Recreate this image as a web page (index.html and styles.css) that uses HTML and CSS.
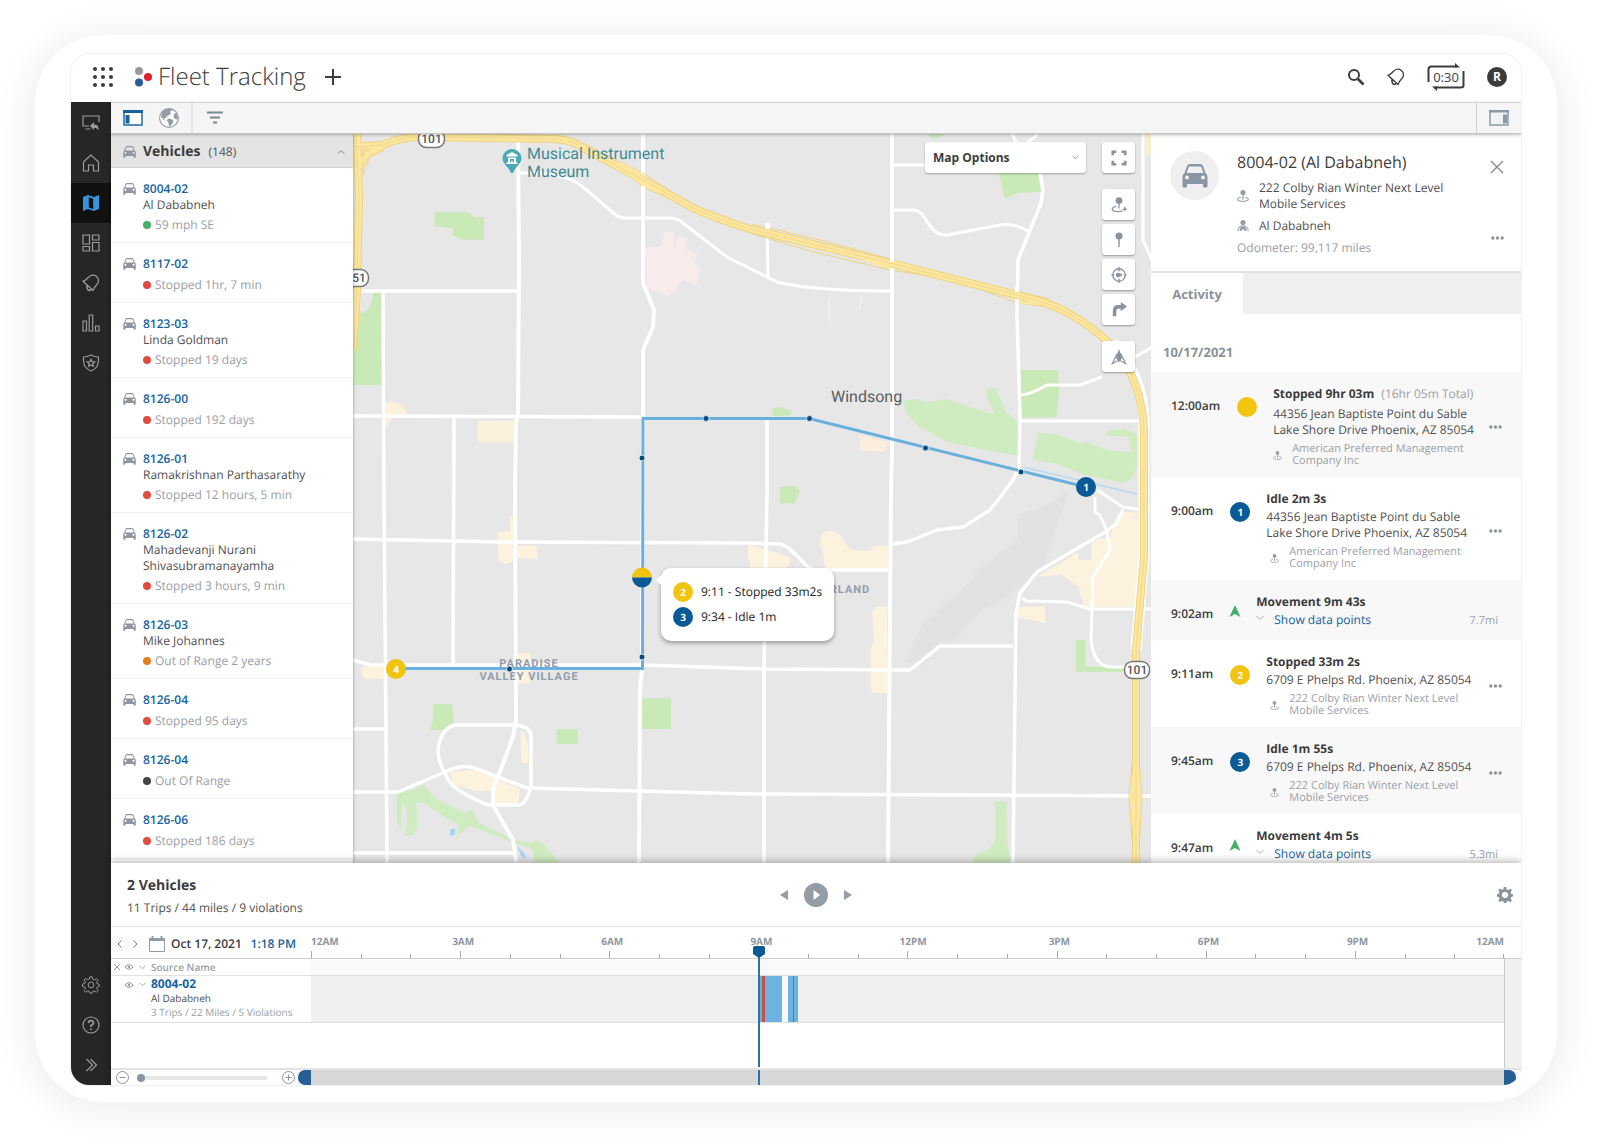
FILE: index.html
```html
<!DOCTYPE html>
<html lang="en">
<head>
<meta charset="utf-8">
<title>Fleet Tracking</title>
<link rel="stylesheet" href="styles.css">
</head>
<body>
<svg class="sprite" aria-hidden="true">
  <symbol id="car" viewBox="0 0 26 24"><path fill-rule="evenodd" d="M5 2 Q6 0 8 0 H18 Q20 0 21 2 L23.500 9 Q25.500 10.500 25.500 13 V22 Q25.500 23.500 24 23.500 H22.500 Q21 23.500 21 22 V20 H5 V22 Q5 23.500 3.500 23.500 H2 Q.5 23.500 .5 22 V13 Q.5 10.500 2.500 9 Z M7 2.500 L4.500 9 H21.500 L19 2.500 Z M5 11.500 a2 2 0 1 0 .01 0 Z M21 11.500 a2 2 0 1 0 .01 0 Z"/></symbol>
  <symbol id="pin" viewBox="0 0 14 14"><circle cx="7" cy="3" r="3"/><path d="M6.300 5h1.400v6H6.300z"/><path d="M4.500 8.500C2 9 .8 9.800 .8 10.700c0 1.500 3 2.500 6.200 2.500s6.200-1 6.200-2.500c0-.9-1.200-1.700-3.700-2.200" fill="none" stroke="currentColor" stroke-width="1.200"/></symbol>
  <symbol id="bell" viewBox="0 0 18 18"><path d="M1 7.200 C5 6.500 6 2.500 9 1.500 C13 .3 16.500 3 16.500 7 C16.500 11 13 10.500 11 16.500 Z M4.500 11.500 L5.500 15.500 Q7.500 17.500 9 15.500" fill="none" stroke="currentColor" stroke-width="1.300" stroke-linejoin="round"/></symbol>
  <symbol id="dots" viewBox="0 0 14 4"><circle cx="2" cy="2" r="1.800"/><circle cx="7" cy="2" r="1.800"/><circle cx="12" cy="2" r="1.800"/></symbol>
  <symbol id="down" viewBox="0 0 8 6"><path d="M.5 1 L4 4.500 L7.500 1" fill="none" stroke="currentColor"/></symbol>
  <symbol id="eye" viewBox="0 0 12 8"><path d="M1 4 Q6 -1.500 11 4 Q6 9.500 1 4Z" fill="none" stroke="currentColor" stroke-width="1.200"/><circle cx="6" cy="4" r="1.400"/></symbol>
  <symbol id="arrow" viewBox="0 0 12 12"><path d="M6 0 L11.500 12 L6 9 L.5 12Z"/></symbol>
  <symbol id="gear" viewBox="-10 -10 20 20"><path fill-rule="evenodd" d="M-1.500-10h3l.6 3 2 .9 2.600-1.800 2 2-1.700 2.600.8 2 2.200.3v3l-2.200.4-.9 2 1.800 2.500-2 2-2.600-1.700-2 .8-.6 2h-3l-.5-2-2-.8-2.500 1.700-2-2 1.700-2.500-.9-2-2.800-.6v-3l2.800-.5.9-2-1.700-2.500 2-2 2.500 1.700 2-.8z M0-4a4 4 0 1 0 .01 0Z"/></symbol>
</svg>

<div class="frame">
<div class="app">
  <header class="topbar">
    <button class="icon-btn apps" aria-label="Apps"><svg width="20" height="20" viewBox="0 0 20 20"><g fill="#3c3c3c"><circle cx="2" cy="2" r="2"/><circle cx="10" cy="2" r="2"/><circle cx="18" cy="2" r="2"/><circle cx="2" cy="10" r="2"/><circle cx="10" cy="10" r="2"/><circle cx="18" cy="10" r="2"/><circle cx="2" cy="18" r="2"/><circle cx="10" cy="18" r="2"/><circle cx="18" cy="18" r="2"/></g></svg></button>
    <svg class="logo" width="17" height="20" viewBox="0 0 17 20"><circle cx="4" cy="4" r="4" fill="#999"/><circle cx="13" cy="10" r="4" fill="#e0202e"/><circle cx="4" cy="15.500" r="4" fill="#2b5b9b"/></svg>
    <h1>Fleet Tracking</h1>
    <button class="icon-btn" aria-label="Add"><svg width="16" height="16" viewBox="0 0 16 16"><path d="M8 0v16M0 8h16" stroke="#3c3c3c" stroke-width="2"/></svg></button>
    <span class="spacer"></span>
    <div class="top-actions">
      <button class="icon-btn" aria-label="Search"><svg width="18" height="18" viewBox="0 0 18 18" fill="none" stroke="#3c3c3c"><circle cx="7" cy="7" r="5" stroke-width="2"/><path d="M11 11l5.500 5.500" stroke-width="2.600"/></svg></button>
      <button class="icon-btn dark" aria-label="Alerts"><svg width="18" height="18"><use href="#bell"/></svg></button>
      <button class="timer"><svg width="38" height="28" viewBox="0 0 38 28"><path d="M1.500 19V6.500q0-3 3-3H30M36.500 8v14.500q0 2-3 2H8" fill="none" stroke="#3c3c3c" stroke-width="2"/><path d="M28 0l5 4.500h-5zM10 28l-5-4.500h5z" fill="#3c3c3c"/></svg><span>0:30</span></button>
      <button class="user">R</button>
    </div>
  </header>

  <div class="body">
    <nav class="rail">
      <a href="#" aria-label="Share"><svg viewBox="0 0 18 18"><path d="M7 12H1V2h16v6M3.500 15h5"/><path class="solid" d="M8 12l4-4v2.500c4 0 5 3 4.500 6-1-2-2-2.500-4.500-2.500V16z"/></svg></a>
      <a href="#" aria-label="Home"><svg viewBox="0 0 18 18"><path d="M1.500 8L9 1l7.500 7v9H11.500v-6h-5v6h-5z"/></svg></a>
      <a href="#" class="on" aria-label="Map"><svg viewBox="0 0 18 18"><path class="fill" fill-rule="evenodd" d="M1 3l5-2 6 2 5-2v14l-5 2-6-2-5 2zM6.800 3.200v10.300l4.400 1.500V4.700z"/></svg></a>
      <a href="#" aria-label="Dashboard"><svg viewBox="0 0 18 18"><path d="M1 1h6.500v9H1zM10.500 1H17v5h-6.500zM1 12.500h6.500V17H1zM10.500 8.500H17V17h-6.500z"/></svg></a>
      <a href="#" aria-label="Alerts"><svg><use href="#bell"/></svg></a>
      <a href="#" aria-label="Reports"><svg viewBox="0 0 18 18"><path d="M1 7h3.500v10H1zM7.200 1h3.500v16H7.200zM13.500 12H17v5h-3.500z"/></svg></a>
      <a href="#" aria-label="Safety"><svg viewBox="0 0 18 18"><path d="M9 1c3 1.500 5 2 7.500 2 0 6 0 11-7.500 14C1.500 14 1.500 9 1.500 3 4 3 6 2.500 9 1z"/><path d="M9 5.200l1.100 2.500 2.600.2-2 1.800.7 2.600L9 10.900l-2.400 1.400.7-2.600-2-1.800 2.600-.2z"/></svg></a>
      <span class="spacer"></span>
      <a href="#" aria-label="Settings"><svg viewBox="-11 -11 22 22"><path d="M-1.500-10h3l.6 3 2 .9 2.600-1.800 2 2-1.700 2.600.8 2 2.200.3v3l-2.200.4-.9 2 1.800 2.500-2 2-2.600-1.700-2 .8-.6 2h-3l-.5-2-2-.8-2.500 1.700-2-2 1.700-2.500-.9-2-2.800-.6v-3l2.800-.5.9-2-1.700-2.500 2-2 2.500 1.700 2-.8z"/><circle r="3.500"/></svg></a>
      <a href="#" aria-label="Help"><svg viewBox="0 0 18 18"><circle cx="9" cy="9" r="8"/><path stroke-width="1.800" d="M6.500 7q.2-2.300 2.500-2.300T11.500 7Q11.500 8.200 9 9.500v1.500M9 12.400v1.500"/></svg></a>
      <a href="#" aria-label="Expand"><svg viewBox="0 0 18 18"><path d="M4.500 3l6 6-6 6M8.500 3l6 6-6 6"/></svg></a>
    </nav>

    <div class="work">
      <div class="toolbar">
        <div class="tools">
          <button class="icon-btn" aria-label="Left panel"><svg width="20" height="16" viewBox="0 0 20 16"><path d="M1 1h18v14H1z" fill="#fff" stroke="#1d6aa5" stroke-width="1.500"/><path d="M0 0h20v3H0z M2.500 5h4v8.500h-4z" fill="#14629e"/></svg></button>
          <button class="icon-btn" aria-label="Globe"><svg width="20" height="20" viewBox="0 0 20 20"><circle cx="10" cy="10" r="9.400" fill="#fff" stroke="#949ca5" stroke-width="1.200"/><path fill="#949ca5" d="M3 4Q7 0 12 1l1 2-2 .5 1 2-2 1.500-3 2 .5 1.500-2-.5-1 .5 2 2-2-.5L2 8.500zM9 10.500l3 .5 2.500 1.500-1 3-2.500 3-1-.5-.5-3L8 13zM15 6l2-1 1.800 3.500-.5 3-2-.5L14.500 9z"/></svg></button>
        </div>
        <button class="icon-btn filter" aria-label="Filter"><svg width="18" height="14" viewBox="0 0 18 14"><path d="M1 1.500h16M4 6.500h10M7 11.500h4" stroke="#7f8890" stroke-width="2"/></svg></button>
        <span class="spacer"></span>
        <button class="right-toggle" aria-label="Right panel"><svg width="20" height="16" viewBox="0 0 20 16"><path d="M1 1h18v14H1z" fill="#eef3f6" stroke="#8d9aa5" stroke-width="1.500"/><path d="M0 0h20v2.500H0z M14 4.500h4v9h-4z" fill="#8d9aa5"/></svg></button>
      </div>

      <div class="main">
        <aside class="vehicles">
          <h2><svg class="car"><use href="#car"/></svg><b>Vehicles</b><span>(148)</span><svg class="up"><use href="#down"/></svg></h2>
          <ul>
            <li><svg class="car"><use href="#car"/></svg><div><a href="#">8004-02</a><p class="name">Al Dababneh</p><p class="status green">59 mph SE</p></div></li>
            <li><svg class="car"><use href="#car"/></svg><div><a href="#">8117-02</a><p class="status red">Stopped 1hr, 7 min</p></div></li>
            <li><svg class="car"><use href="#car"/></svg><div><a href="#">8123-03</a><p class="name">Linda Goldman</p><p class="status red">Stopped 19 days</p></div></li>
            <li><svg class="car"><use href="#car"/></svg><div><a href="#">8126-00</a><p class="status red">Stopped 192 days</p></div></li>
            <li><svg class="car"><use href="#car"/></svg><div><a href="#">8126-01</a><p class="name">Ramakrishnan Parthasarathy</p><p class="status red">Stopped 12 hours, 5 min</p></div></li>
            <li><svg class="car"><use href="#car"/></svg><div><a href="#">8126-02</a><p class="name">Mahadevanji Nurani<br>Shivasubramanayamha</p><p class="status red">Stopped 3 hours, 9 min</p></div></li>
            <li><svg class="car"><use href="#car"/></svg><div><a href="#">8126-03</a><p class="name">Mike Johannes</p><p class="status orange">Out of Range 2 years</p></div></li>
            <li><svg class="car"><use href="#car"/></svg><div><a href="#">8126-04</a><p class="status red">Stopped 95 days</p></div></li>
            <li><svg class="car"><use href="#car"/></svg><div><a href="#">8126-04</a><p class="status black">Out Of Range</p></div></li>
            <li><svg class="car"><use href="#car"/></svg><div><a href="#">8126-06</a><p class="status red">Stopped 186 days</p></div></li>
          </ul>
        </aside>

        <section class="map">
          <svg class="canvas" viewBox="353 134 798 729" preserveAspectRatio="xMidYMid slice">
            <rect x="353" y="134" width="798" height="729" fill="#e7e7e7"/>
            <!-- parks, shops and hospital grounds -->
            <g transform="translate(350 130) scale(.33333)">
              <path fill="#c9e9b6" d="M254 247h100l20 14h28v68h-60l-36-12 4-22-56-6zM10 765L12 660 25 550q40-5 45-64h26v280z"/>
              <path fill="#f7ebeb" d="M885 350h45l15-45h28v40l15-28 25 8-8 30 38 18-10 28 22 12-18 52-40-16-25 38-20 12-62-26z"/>
              <path fill="#fbf1dc" d="M105 820q40-15 65 25v15h-40l-15 28h-10zM383 872h110v65H390l-7-6z"/>
            </g>
            <g transform="translate(750 130) scale(.33333)">
              <path fill="#c9e9b6" d="M538 12h42q-10 18-42 8zM745 125h118l10 60-70 4-38 18zM812 720h110l6 50-8 90-105 4zM67 836l25-5 34 12-8 14-50 1zM90 1070l45-2 15 12-15 40H90z"/>
              <path fill="#cfecc0" d="M458 812l40-5 30 10 60-10 120 40 24 5-24-60q5-25 30-15l30 70 35 30v100l-60-10-150-30-90-50q-40-40-45-75zM865 908l50 3 80 30 30-25-20 20 70 25 70 5-10-45-65-5 5-15 50-3 36 15v90q-5 50-45 55l-110-22-90-35-68-12z"/>
              <path fill="#fbeedd" d="M330 915l85 20-12 30-73-3z"/>
              <path stroke="#f8f4e0" stroke-width="4" fill="none" d="M238 508v70M336 500l-10 40"/>
              <path fill="#f6efd0" d="M1184 12h20v62h-20z"/>
            </g>
            <g transform="translate(350 490) scale(.33333)">
              <path fill="#c9e9b6" d="M250 642h56l6 52-20 25h-52l8-25zM877 625h86v92h-86zM620 718h63v44h-63z"/>
              <path fill="#cfecc0" d="M140 908l50-8 30-15 20 20 20 22 85 43 22-12 20 42 105 50 50 10 20-10 25 20 42 48h-76l-5-40-70-25-90-35-30-10-25 22-15 5 10-30-40-22-60-40-30-8q12 80-8 100l-25 2q15-60-5-100-15 50 0 92l-20-33z"/>
              <path fill="#a9d0f5" d="M300 1020l15-5v18l-15 5zM502 1070l22 20 4 18-14-8z"/>
              <path fill="#fdf2dd" d="M480 78h10v90h72v38h-55v-2l-35 18q-25-3-27-15v-52l-4-30h39zM500 492l40-4v92h-36zM35 530h74v36H45q-10-5-10-36zM513 720q25 20 23 100h-20q-5-60-3-100zM300 845l110-8 30 30 70 30-5 45-75-3 5-40-55 5-70-20zM1194 165h10v45h-10z"/>
            </g>
            <g transform="translate(750 490) scale(.33333)">
              <path fill="#e2e2e2" d="M960 0L880 50 800 75l5 75-120 90-30 40-140 125-20 50-30 60 60 10 30-60 60-15 80-90 50-20 130-100 30-90z"/>
              <path fill="#c9e9b6" d="M90 0h60q-10 30-45 40-17-10-15-40zM977 450h28v80h130l-20 15H977z"/>
              <path fill="#cfecc0" d="M735 935h34l2 110 10 73H665q10-30 45-35 25-20 25-40z"/>
              <path fill="#fdf2dd" d="M0 165l120 35q5 10-10 35H0zM215 130q35-20 60 10 15 30 30 40l55 2 10-15h45v70H225q-5-60-15-75zM378 350h34v260h-40q-10-5-10-30v-100l10-30-6-80zM805 350h80v50l-30-8-55-10zM860 260l85-50 40-25v25h40v-55l25-10h30l10-40 15-35q20-10 58 0v280h-160l-18-60-50-35z"/>
            </g>
            <!-- streets -->
            <g fill="none" stroke="#fff" stroke-width="3.500" stroke-linejoin="round">
              <path d="M383 291L384 500L386 730L387 863M454 417L453 665"/>
              <path stroke-width="4" d="M518 142L519 257L518 413L516 423L515 490L516 720L513 737L493 790V805L513 840L516 862"/>
              <path stroke-width="4" d="M643 134V283L654 310L653 327L643 350V417L642 670L640 690L639 863"/>
              <path d="M767 420V490L764 670V863"/>
              <path stroke-width="4" d="M892 134V450L891 490L888 863"/>
              <path d="M1040 173L1043 190L1041 203L1018 260L1017 316L1020 416L1019 467L1013 480L998 500L990 510L963 527L937 530L907 542L892 544"/>
              <path d="M1107 531L1037 572L1020 593L1016 613L1013 863"/>
              <path d="M360 291H518M353 416L643 417M353 539L503 542L750 543L780 544Q788 546 794 553L807 566Q812 570 820 570H888"/>
              <path d="M353 660L370 665H642L764 669L910 670L940 646H1013M353 729H385"/>
              <path d="M353 792H398L445 772Q463 763 477 769L527 788L750 794L1152 796M353 853H513"/>
              <path d="M454 725H517Q530 727 531 735V787Q526 805 518 805H488Q465 796 452 785Q438 765 438 750Q440 730 454 725Z"/>
              <path stroke-width="3" d="M520 173H540Q572 176 584 188L617 216L623 218H670Q680 219 684 224L727 257L777 282Q815 291 890 291M767 223L768 277"/>
              <path stroke-width="3" d="M892 165H950M894 210H915Q922 212 926 220Q935 236 947 235L1000 225Q1015 223 1028 231M1020 395Q1030 395 1047 385H1080L1102 377M1135 357L1152 347M1020 421H1139M1143 134L1143 240L1152 260M1012 134L1017 143M1038 134L1027 143"/>
              <path stroke-width="3" d="M1097 490L1123 507L1150 511M1123 510L1117 523L1107 531M1095 497V512L1100 515L1107 531L1110 550L1093 577L1091 640Q1094 667 1112 667H1128M1022 598L1027 601L1067 602L1090 609H1152"/>
            </g>
            <path d="M1023 467L1137 494" stroke="#b9d9f0" stroke-width="1.500" fill="none"/>
            <!-- freeways -->
            <g fill="none" stroke-linejoin="round">
              <path stroke="#fff" stroke-width="11" d="M1113 343Q1142 375 1144 420V557L1136 650"/>
              <g stroke="#f0d27c" stroke-width="8">
                <path d="M353 147L383 145Q400 137 420 137L557 139Q575 141 583 148L643 180L693 208Q720 220 750 229L890 263L1017 295Q1050 303 1068 313Q1095 328 1113 347Q1142 380 1144 430V557L1136 650L1136 863"/>
                <path d="M357 134L359 197L357 290L353 350M356 172L366 155L383 147"/>
                <path stroke-width="1" d="M583 143L643 173L690 204M600 152L643 187L700 212M752 224L820 240L890 259M750 233L810 251L890 270L930 276M985 291L1017 303L1050 307M1010 290L1050 299M1134 745L1129 797L1134 863M1138 745L1142 797L1138 863"/>
              </g>
              <g stroke="#fbe7a0" stroke-width="6">
                <path d="M353 147L383 145Q400 137 420 137L557 139Q575 141 583 148L643 180L693 208Q720 220 750 229L890 263L1017 295Q1050 303 1068 313Q1095 328 1113 347Q1142 380 1144 430V557L1136 650L1136 863"/>
                <path d="M357 134L359 197L357 290L353 350M356 172L366 155L383 147"/>
                <path stroke-width="3" d="M620 163L643 175M620 166L643 185L660 192M830 247L890 268M1017 302L1040 304M1136 760L1131 797L1136 850M1137 760L1140 797L1137 840"/>
              </g>
              <g stroke="#f3d88a" stroke-width="1">
                <path d="M353 147L383 145Q400 137 420 137L557 139Q575 141 583 148L643 180L693 208Q720 220 750 229L890 263L1017 295Q1050 303 1068 313Q1095 328 1113 347Q1142 380 1144 430V557L1136 650L1136 863"/>
                <path d="M356 134L359 197L357 290L354 350M353 152L364 146L363 175L370 156L383 149"/>
              </g>
              <path stroke="#fff" stroke-width="4" d="M643 165V173M643 186V195M768 223V229M892 255V262M892 268V276M1017 286V292M1017 299V305"/>
            </g>
            <!-- highway shields -->
            <g class="shield">
              <rect x="418.500" y="130.500" width="26" height="17" rx="8"/><text x="431.500" y="143">101</text>
              <rect x="341.500" y="269.500" width="27" height="17" rx="8"/><text x="359" y="282">51</text>
              <rect x="1124.500" y="661.500" width="25" height="17" rx="8"/><text x="1137" y="674">101</text>
            </g>
            <!-- place names -->
            <path fill="#4aa9b7" d="M512 149a9.500 9.500 0 0 1 9.500 9.500c0 5-6 8-8.500 14.500h-2c-2.500-6.500-8.500-9.500-8.500-14.500a9.500 9.500 0 0 1 9.500-9.500z"/>
            <path fill="#fff" d="M512 152l5.500 3v1.500h-11V155zM508 157.500h8v5h1.500v1.500h-11v-1.500h1.500zM510 159v3.500h1.200v-2.200l.8 1 .8-1v2.200h1.200V159z"/>
            <text class="poi" x="527" y="159">Musical Instrument</text>
            <text class="poi" x="527" y="177">Museum</text>
            <text class="town" x="831" y="402">Windsong</text>
            <text class="area" x="529" y="667">PARADISE</text>
            <text class="area" x="529" y="680">VALLEY VILLAGE</text>
            <text class="area" x="850" y="593">RLAND</text>
            <!-- trip route -->
            <path d="M396 668.500H642.500L643 418.500H809L1086 487" fill="none" stroke="#6ab0df" stroke-width="3"/>
            <g fill="#084a7c" stroke="#d5e6f2" stroke-width="1">
              <circle cx="706" cy="418.500" r="3"/><circle cx="642" cy="458" r="3"/><circle cx="809.500" cy="418.500" r="3"/><circle cx="925.500" cy="448" r="3"/><circle cx="1021" cy="472" r="3"/><circle cx="642" cy="657" r="3"/><circle cx="509.500" cy="669" r="3"/>
            </g>
            <circle cx="1086" cy="487" r="10" fill="#0a5a96"/><text class="stop" x="1086" y="491">1</text>
            <circle cx="396" cy="669" r="10" fill="#f1c40f"/><text class="stop" x="396" y="673">4</text>
            <path fill="#f1c40f" d="M632 577.500a10 10 0 0 1 20 0z"/><path fill="#0a5a96" d="M632 577.500a10 10 0 0 0 20 0z"/>
          </svg>

          <div class="popup">
            <p><span class="num yellow">2</span>9:11 - Stopped 33m2s</p>
            <p><span class="num blue">3</span>9:34 - Idle 1m</p>
          </div>

          <div class="map-ui">
            <div class="map-select"><select aria-label="Map Options"><option>Map Options</option></select><svg><use href="#down"/></svg></div>
            <div class="map-btns">
              <button aria-label="Full screen"><svg viewBox="0 0 18 18"><path d="M2 6V2h4M12 2h4v4M16 12v4h-4M6 16H2v-4" fill="none" stroke="#8a929a" stroke-width="3"/></svg></button>
              <div class="group">
                <button aria-label="Add place"><svg viewBox="0 0 18 18"><circle cx="9" cy="4" r="3.800"/><path d="M8.300 6h1.400v7H8.300zM13 13h5v1.400h-5zM14.800 11h1.400v5h-1.400z"/><path d="M6 10.500C3 11 1.500 12 1.500 13.500c0 1.800 3 3 6.500 3q3 0 5-.8" fill="none" stroke="#8a929f" stroke-width="1.500"/></svg></button>
                <button aria-label="Pin"><svg viewBox="0 0 18 18"><circle cx="9" cy="4.500" r="4"/><path d="M8.200 6h1.600v11H8.200z"/></svg></button>
                <button aria-label="Locate"><svg viewBox="0 0 18 18"><circle cx="9" cy="9" r="7" fill="none" stroke="#8a929f" stroke-width="1.500"/><path d="M8.300 0h1.400v5H8.300zM8.300 13h1.400v5H8.300zM0 8.300h4v1.400H0zM14 8.300h4v1.400h-4z"/><circle cx="8" cy="9" r="2.500"/><path d="M10.500 6.500q4 2 0 5z"/></svg></button>
                <button aria-label="Route"><svg viewBox="0 0 18 18"><path d="M2 16V10q0-6.500 6-6.500h3V0l7 5.200-7 5.300V7.500H8q-2 0-2 2.500V16z"/></svg></button>
              </div>
              <button aria-label="Traffic"><svg viewBox="0 0 18 18"><path d="M9 0l3.500 10L9 15 5.500 10z"/><path d="M7 5L1.500 16.500 9 12.500l7.500 4L11 5" fill="none" stroke="#8a929f" stroke-width="1.300"/></svg></button>
            </div>
          </div>
        </section>

        <aside class="detail">
          <div class="summary">
            <span class="avatar"><svg><use href="#car"/></svg></span>
            <div class="who">
              <h2>8004-02 (Al Dababneh)</h2>
              <p class="line"><svg><use href="#pin"/></svg><span>222 Colby Rian Winter Next Level<br>Mobile Services</span></p>
              <p class="line"><svg viewBox="0 0 14 14"><circle cx="7" cy="3" r="3"/><path d="M3 13q0-5.500 4-5.500t4 5.500l-2-.5-2-2-2 2z"/><path d="M1 13q0-6 6-6t6 6" fill="none" stroke="currentColor" stroke-width="1.200"/></svg><span>Al Dababneh</span></p>
              <p class="odo">Odometer: 99,117 miles</p>
            </div>
            <div class="side">
              <button class="icon-btn" aria-label="Close"><svg width="14" height="14" viewBox="0 0 14 14"><path d="M1 1l12 12M13 1L1 13" stroke="#8a929a" stroke-width="1.500"/></svg></button>
              <button class="more" aria-label="More"><svg><use href="#dots"/></svg></button>
            </div>
          </div>
          <div class="tabs"><button class="tab">Activity</button></div>
          <p class="date">10/17/2021</p>
          <div class="event first"><time>12:00am</time><span class="num yellow"></span><div class="info"><h3>Stopped 9hr 03m <small>(16hr 05m Total)</small></h3><p>44356 Jean Baptiste Point du Sable<br>Lake Shore Drive Phoenix, AZ 85054</p><div class="org"><svg><use href="#pin"/></svg><span>American Preferred Management<br>Company Inc</span></div></div><button class="more" aria-label="More"><svg><use href="#dots"/></svg></button></div>
          <div class="event"><time>9:00am</time><span class="num blue">1</span><div class="info"><h3>Idle 2m 3s</h3><p>44356 Jean Baptiste Point du Sable<br>Lake Shore Drive Phoenix, AZ 85054</p><div class="org"><svg><use href="#pin"/></svg><span>American Preferred Management<br>Company Inc</span></div></div><button class="more" aria-label="More"><svg><use href="#dots"/></svg></button></div>
          <div class="event move"><time>9:02am</time><svg class="heading"><use href="#arrow"/></svg><div class="info"><h3>Movement 9m 43s</h3><a href="#"><svg><use href="#down"/></svg>Show data points</a></div><span class="dist">7.7mi</span></div>
          <div class="event"><time>9:11am</time><span class="num yellow">2</span><div class="info"><h3>Stopped 33m 2s</h3><p>6709 E Phelps Rd. Phoenix, AZ 85054</p><div class="org"><svg><use href="#pin"/></svg><span>222 Colby Rian Winter Next Level<br>Mobile Services</span></div></div><button class="more" aria-label="More"><svg><use href="#dots"/></svg></button></div>
          <div class="event"><time>9:45am</time><span class="num blue">3</span><div class="info"><h3>Idle 1m 55s</h3><p>6709 E Phelps Rd. Phoenix, AZ 85054</p><div class="org"><svg><use href="#pin"/></svg><span>222 Colby Rian Winter Next Level<br>Mobile Services</span></div></div><button class="more" aria-label="More"><svg><use href="#dots"/></svg></button></div>
          <div class="event move"><time>9:47am</time><svg class="heading"><use href="#arrow"/></svg><div class="info"><h3>Movement 4m 5s</h3><a href="#"><svg><use href="#down"/></svg>Show data points</a></div><span class="dist">5.3mi</span></div>
        </aside>
      </div>

      <section class="timeline">
        <div class="tl-head">
          <div class="totals"><h2>2 Vehicles</h2><p>11 Trips / 44 miles / 9 violations</p></div>
          <div class="player">
            <button class="icon-btn" aria-label="Previous"><svg width="8" height="10" viewBox="0 0 8 10"><path d="M8 0v10L0 5z" fill="#949ca5"/></svg></button>
            <button class="icon-btn" aria-label="Play"><svg width="24" height="24" viewBox="0 0 24 24"><circle cx="12" cy="12" r="12" fill="#949ca5"/><path d="M9.500 7v10l6.500-5z" fill="#fff"/></svg></button>
            <button class="icon-btn" aria-label="Next"><svg width="8" height="10" viewBox="0 0 8 10"><path d="M0 0v10l8-5z" fill="#949ca5"/></svg></button>
          </div>
          <button class="icon-btn tl-gear" aria-label="Settings"><svg width="16" height="16"><use href="#gear"/></svg></button>
        </div>

        <div class="tl-grid">
          <div class="picker">
            <button class="icon-btn" aria-label="Previous day"><svg width="5" height="8" viewBox="0 0 5 8"><path d="M4.500.5L1 4l3.500 3.500" fill="none" stroke="#777" /></svg></button>
            <button class="icon-btn" aria-label="Next day"><svg width="5" height="8" viewBox="0 0 5 8"><path d="M.5.5L4 4 .5 7.500" fill="none" stroke="#777"/></svg></button>
            <svg class="cal" width="16" height="16" viewBox="0 0 16 16"><path d="M.5 2.500h15v13H.5z" fill="#fff" stroke="#949ca5"/><path d="M0 2h16v3H0zM2.500 0h2v3h-2zM11.500 0h2v3h-2z" fill="#949ca5"/></svg>
            <b>Oct 17, 2021</b><b class="clock">1:18 PM</b>
          </div>
          <div class="ruler">
            <div class="hours"><span class="start">12AM</span><span>3AM</span><span>6AM</span><span>9AM</span><span>12PM</span><span>3PM</span><span>6PM</span><span>9PM<i>12AM</i></span></div>
            <div class="ticks"><i></i><i></i><i></i><i></i><i></i><i></i><i></i><i></i><i></i><i></i><i></i><i></i><i></i><i></i><i></i><i></i><i></i><i></i><i></i><i></i><i></i><i></i><i></i><i></i></div>
            <div class="playhead" style="left:37.500%"><svg width="12" height="12" viewBox="0 0 12 12"><path d="M2 0h8q2 0 2 2v6l-6 4-6-4V2q0-2 2-2z" fill="#0a5a96"/></svg></div>
          </div>
          <div class="edge top"></div>

          <div class="src-head"><span class="x"><svg width="6" height="6" viewBox="0 0 6 6"><path d="M0 0l6 6M6 0L0 6" stroke="#999"/></svg></span><svg class="eye"><use href="#eye"/></svg><svg class="chev"><use href="#down"/></svg><b>Source Name</b></div>
          <div class="lane-head"></div>
          <div class="edge"></div>

          <div class="src"><svg class="eye"><use href="#eye"/></svg><svg class="chev"><use href="#down"/></svg><div><a href="#">8004-02</a><p>Al Dababneh</p><p class="muted">3 Trips / 22 Miles / 5 Violations</p></div></div>
          <div class="lane">
            <span class="trip" style="left:37.600%;width:1.850%"><i style="left:11%;width:3px"></i></span>
            <span class="gap" style="left:39.450%;width:.500%"></span>
            <span class="trip" style="left:39.950%;width:.900%"><i style="left:55%;width:1px"></i></span>
          </div>
          <div class="edge"></div>

          <div></div><div></div><div class="edge"></div>
        </div>

        <div class="tl-foot">
          <div class="zoom">
            <button class="icon-btn" aria-label="Zoom out"><svg width="13" height="13" viewBox="0 0 13 13" fill="none" stroke="#8a929a"><circle cx="6.500" cy="6.500" r="6"/><path d="M3.500 6.500h6"/></svg></button>
            <input type="range" min="0" max="100" value="0" aria-label="Zoom">
            <button class="icon-btn" aria-label="Zoom in"><svg width="13" height="13" viewBox="0 0 13 13" fill="none" stroke="#8a929a"><circle cx="6.500" cy="6.500" r="6"/><path d="M3.500 6.500h6M6.500 3.500v6"/></svg></button>
          </div>
          <span class="cap left"></span>
          <div class="scroll"><span style="left:37.500%"></span></div>
          <span class="cap right"></span>
        </div>
      </section>
    </div>
  </div>
</div>
</div>
</body>
</html>
```
FILE: styles.css
```css
* { box-sizing: border-box; margin: 0; padding: 0; }
body {
  display: flex;
  height: 100vh;
  min-height: 900px;
  padding: 35px 43px 44px 35px;
  background: #fff;
  color: #505050;
  font: 12px/16px "Open Sans", "Noto Sans", sans-serif;
  text-rendering: geometricPrecision;
}
button { border: 0; background: none; font: inherit; color: inherit; cursor: pointer; }
a { color: #14629e; text-decoration: none; }
ul { list-style: none; }
svg { display: block; flex: none; }
svg:not([fill]) { fill: currentColor; }
i { font-style: normal; }
.sprite { display: none; }
.spacer { flex: 1; }
.icon-btn { display: flex; align-items: center; justify-content: center; flex: none; }

.frame {
  display: flex;
  flex: 1;
  padding: 19px 36px 17px;
  border-radius: 68px;
  background: #fff;
  box-shadow: 0 4px 44px rgba(0, 0, 0, .09);
}
.app {
  display: flex;
  flex-direction: column;
  flex: 1;
  min-width: 0;
  overflow: hidden;
  border-radius: 18px;
  background: #fff;
  box-shadow: 0 0 0 1px #f1f1f1;
}

/* top bar */
.topbar { display: flex; align-items: center; flex: none; height: 48px; padding: 0 14px 2px 22px; }
.topbar .logo { margin: 0 6px 0 22px; }
.topbar h1 { margin-right: 19px; color: #3c3c3c; font-size: 24px; line-height: 30px; font-weight: 300; }
.top-actions { display: flex; align-items: center; gap: 22px; }
.dark { color: #3c3c3c; }
.timer { display: grid; place-items: center; }
.timer > * { grid-area: 1 / 1; }
.timer span { color: #3c3c3c; font-size: 13px; }
.user { width: 20px; height: 20px; border-radius: 50%; background: #3c3c3c; color: #fff; font-weight: 700; line-height: 20px; }

.body { display: flex; flex: 1; min-height: 0; }

/* icon rail */
.rail { display: flex; flex-direction: column; flex: none; width: 40px; padding-top: 1px; background: #262626; }
.rail a { display: flex; align-items: center; justify-content: center; height: 40px; color: #9b9b9b; }
.rail a.on { background: #111; color: #3a94dc; }
.rail svg { width: 18px; height: 18px; fill: none; stroke: currentColor; stroke-width: 1.2; }
.rail .solid { fill: currentColor; stroke: none; }
.rail .fill { fill: currentColor; stroke: none; }

.work { display: flex; flex-direction: column; flex: 1; min-width: 0; }
.toolbar {
  position: relative;
  z-index: 3;
  display: flex;
  flex: none;
  height: 32px;
  border-top: 1px solid #d8d8d8;
  border-bottom: 1px solid #c4c4c4;
  background: #f5f5f5;
  box-shadow: 0 1px 3px rgba(0, 0, 0, .25);
}
.tools { display: flex; gap: 16px; width: 82px; padding-left: 12px; border-right: 2px solid #e4e4e4; }
.filter { padding-left: 13px; }
.right-toggle { display: grid; place-items: center; width: 45px; border-left: 1px solid #d0d0d0; }

.main { display: flex; flex: 1; min-height: 0; }

/* vehicle list */
.vehicles { position: relative; z-index: 1; flex: none; width: 242px; overflow: hidden; background: #fff; box-shadow: 0 0 3px rgba(0, 0, 0, .4); }
.vehicles h2 { display: flex; align-items: center; height: 34px; padding: 3px 8px 0 12px; border-bottom: 1px solid #d2d2d2; background: #e4e4e4; font-size: 12px; font-weight: 400; }
.vehicles h2 b { color: #3c3c3c; font-size: 14px; }
.vehicles h2 span { flex: 1; padding-left: 8px; }
.vehicles .up { width: 8px; height: 6px; color: #888; rotate: 180deg; }
.car { width: 13px; height: 12px; margin-right: 7px; color: #8f96a0; }
.vehicles li { display: flex; padding: 13px 12px 9px; border-bottom: 1px solid #f0f0f0; }
.vehicles li .car { margin-top: 2px; }
.vehicles li a { display: block; font-weight: 600; }
.vehicles .name { margin-bottom: -1px; }
.status { display: flex; align-items: center; gap: 4px; padding-top: 5px; color: #9aa0a6; }
.status::before { content: ""; width: 8px; height: 8px; border-radius: 50%; background: currentColor; }
.status.green::before { background: #45ae68; }
.status.red::before { background: #e24b3f; }
.status.orange::before { background: #e67e22; }
.status.black::before { background: #444; }

/* map */
.map { position: relative; flex: 1; min-width: 0; overflow: hidden; background: #e7e7e7; }
.canvas { width: 100%; height: 100%; }
.shield rect { fill: #fff; stroke: #777; stroke-width: 1.5; }
.shield text { fill: #555; font: 500 12px Roboto, sans-serif; text-anchor: middle; }
.poi { fill: #418a93; font: 16px Roboto, sans-serif; }
.town { fill: #5a5d60; font: 16px Roboto, sans-serif; }
.area { fill: #929bab; font: 700 11px Roboto, sans-serif; letter-spacing: 1px; text-anchor: middle; }
.stop { fill: #fff; font: 700 10px "Open Sans", sans-serif; text-anchor: middle; }
.num { flex: none; width: 20px; height: 20px; border-radius: 50%; color: #fff; font-size: 10px; font-weight: 700; line-height: 20px; text-align: center; }
.num.yellow { background: #f1c40f; }
.num.blue { background: #0a5a96; }
.popup {
  position: absolute;
  left: 308px;
  top: 434px;
  display: flex;
  flex-direction: column;
  gap: 5px;
  padding: 14px 12px;
  border-radius: 10px;
  background: #fff;
  box-shadow: 0 2px 4px rgba(0, 0, 0, .35);
  color: #222;
}
.popup::before { content: ""; position: absolute; left: -5px; top: 7px; border: 5px solid transparent; border-right-color: #fff; border-left: 0; }
.popup p { display: flex; align-items: center; gap: 8px; white-space: nowrap; }
.map-ui { position: absolute; top: 8px; right: 16px; display: flex; align-items: flex-start; gap: 16px; }
.map-select { display: grid; align-items: center; }
.map-select > * { grid-area: 1 / 1; }
.map-select select { width: 161px; height: 31px; padding: 0 8px; border: 0; border-radius: 3px; appearance: none; background: #fff; box-shadow: 0 1px 2px rgba(0, 0, 0, .3); color: #3c3c3c; font: 700 12px "Open Sans", sans-serif; }
.map-select svg { justify-self: end; width: 7px; height: 5px; margin-right: 7px; color: #888; pointer-events: none; }
.map-btns { display: flex; flex-direction: column; gap: 16px; }
.group { display: flex; flex-direction: column; gap: 4px; }
.map-btns button { display: grid; place-items: center; width: 33px; height: 31px; border-radius: 3px; background: #fff; box-shadow: 0 1px 2px rgba(0, 0, 0, .35); }
.map-btns svg { width: 16px; height: 16px; color: #8a929f; }

/* detail panel */
.detail { flex: none; width: 370px; overflow: hidden; background: #fff; }
.summary { display: flex; height: 139px; padding: 17px 17px 0 19px; border-bottom: 2px solid #e2e2e2; }
.avatar { display: grid; place-items: center; width: 49px; height: 49px; border-radius: 50%; background: #efefef; color: #8a95a3; }
.avatar svg { width: 26px; height: 24px; }
.who { flex: 1; padding-left: 18px; }
.who h2 { margin-bottom: 7px; color: #3c3c3c; font-size: 16px; line-height: 22px; font-weight: 500; }
.line { display: flex; align-items: center; gap: 10px; margin-bottom: 6px; }
.line svg { width: 12px; height: 12px; color: #949ca5; }
.odo { color: #9aa0a6; }
.side { display: flex; flex-direction: column; align-items: center; gap: 62px; padding-top: 9px; }
.more svg { width: 13px; height: 4px; color: #8a929a; }
.tabs { height: 41px; background: #f0f0f0; }
.tab { width: 92px; height: 41px; background: #fff; color: #8a929a; font-size: 13px; font-weight: 700; }
.date { padding: 28px 12px 10px; height: 58px; color: #8a929a; font-size: 13px; line-height: 20px; font-weight: 700; }
.event { display: flex; align-items: flex-start; padding: 14px 19px 10px 20px; }
.event:nth-child(even) { background: #f8f8f8; }
.event time { padding-top: 12px; color: #3c3c3c; font-weight: 600; }
.event .num { margin: 11px 16px 0 17px; }
.event .info { flex: 1; white-space: nowrap; }
.event h3 { margin-bottom: 2px; color: #3c3c3c; font-size: 12px; font-weight: 700; }
.event.first h3 { margin-bottom: 4px; }
.event small { padding-left: 4px; color: #9aa0a6; font-size: 12px; font-weight: 400; }
.org { display: flex; align-items: center; gap: 10px; padding: 5px 0 0 4px; color: #9aa0a6; font-size: 11px; line-height: 12px; }
.event.first .org { padding-left: 0; }
.org svg { width: 9px; height: 9px; }
.event .more { align-self: center; }
.event .heading { width: 12px; height: 12px; margin: 11px 15px 0 16px; color: #45ae68; }
.event.move { padding-bottom: 12px; padding-right: 23px; }
.event.move a { display: flex; gap: 10px; }
.event.move a svg { width: 8px; height: 6px; margin-top: 3px; color: #aaa; }
.dist { padding-top: 20px; color: #9aa0a6; font-size: 11px; line-height: 14px; }

/* timeline */
.timeline { position: relative; z-index: 2; display: flex; flex-direction: column; flex: none; height: 222px; background: #fff; box-shadow: 0 -2px 7px rgba(0, 0, 0, .28); }
.tl-head { display: grid; grid-template-columns: 1fr auto 1fr; align-items: center; flex: none; height: 64px; padding: 0 8px; border-bottom: 1px solid #e6e6e6; }
.totals { padding: 2px 0 0 8px; }
.tl-head h2 { margin-bottom: 4px; color: #3c3c3c; font-size: 14px; line-height: 20px; font-weight: 700; }
.player { display: flex; align-items: center; gap: 16px; }
.tl-gear { justify-self: end; color: #8a929a; }
.tl-grid { display: grid; grid-template-columns: 200px 1fr 17px; grid-template-rows: 32px 17px 47px 1fr; flex: 1; min-height: 0; }
.picker { display: flex; align-items: center; padding: 2px 0 0 6px; border-bottom: 1px solid #ccc; white-space: nowrap; }
.picker b { color: #3c3c3c; font-size: 12px; font-weight: 600; }
.picker .icon-btn + .icon-btn { margin-left: 11px; }
.picker .cal { margin: 0 6px 0 11px; }
.picker b.clock { margin-left: auto; padding-right: 15px; color: #14629e; }
.ruler { position: relative; display: flex; flex-direction: column; justify-content: space-between; border-bottom: 1px solid #ccc; }
.hours { display: grid; grid-template-columns: repeat(8, 1fr); padding-top: 6px; color: #8f979f; font-size: 10px; font-weight: 700; }
.hours span { display: flex; justify-content: space-between; margin-left: -8px; white-space: nowrap; }
.hours .start { margin-left: 0; }
.ticks { display: grid; grid-template-columns: repeat(24, 1fr); align-items: end; height: 7px; }
.ticks i { height: 4px; border-left: 1px solid #aaa; }
.ticks i:nth-child(3n+1) { height: 7px; }
.ticks i:last-child { border-right: 1px solid #aaa; }
.playhead { position: absolute; z-index: 1; top: 19px; height: 121px; width: 2px; background: #2874ab; }
.playhead svg { margin-left: -5px; }
.edge { border-left: 1px solid #ccc; background: #f0f0f0; }
.edge.top { border-left: 0; border-bottom: 1px solid #ccc; background: #fff; }
.src-head { display: flex; align-items: center; padding-left: 3px; border-bottom: 1px solid #e2e2e2; color: #9aa0a6; font-size: 10px; }
.src-head b { font-weight: 600; }
.src-head .x { width: 10px; }
.eye { width: 10px; height: 8px; margin-right: 5px; color: #999; }
.chev { width: 7px; height: 5px; margin-right: 5px; color: #999; }
.lane-head { border-bottom: 1px solid #dedede; background: #f9f9f9; }
.src { display: flex; padding: 1px 0 0 13px; border-bottom: 1px solid #e2e2e2; font-size: 10px; line-height: 14px; white-space: nowrap; }
.src a { display: block; font-size: 12px; font-weight: 700; line-height: 14px; }
.src .eye { margin-top: 4px; }
.src .chev { margin-top: 5px; }
.muted { color: #9aa0a6; }
.lane { position: relative; border-bottom: 1px solid #dedede; background: #efefef; }
.trip, .gap { position: absolute; top: 0; bottom: 0; background: #6db3e2; }
.gap { background: #f8f8f8; }
.trip i { position: absolute; top: 0; bottom: 0; background: #c8504a; }
.tl-foot { display: flex; flex: none; height: 17px; padding-right: 5px; border-top: 2px solid #e4e4e4; }
.zoom { display: flex; align-items: center; justify-content: space-between; width: 187px; padding: 0 3px 0 5px; }
.zoom input { width: 130px; height: 9px; margin-right: 8px; appearance: none; background: linear-gradient(#e6e6e6, #e6e6e6) center / 100% 4px no-repeat; }
.zoom input::-webkit-slider-thumb { appearance: none; width: 8px; height: 8px; border-radius: 50%; background: #8a97a3; }
.cap { width: 13px; background: #265f96; }
.cap.left { border-radius: 7px 0 0 7px; }
.cap.right { width: 12px; border-radius: 0 7px 7px 0; }
.scroll { position: relative; flex: 1; background: #d8d8d8; }
.scroll span { position: absolute; top: 0; bottom: 0; width: 2px; background: #2874ab; }
```
